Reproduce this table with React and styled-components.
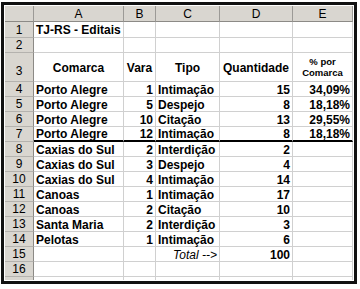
import React from 'react';
import styled, { createGlobalStyle } from 'styled-components';

const Global = createGlobalStyle`
  html, body { margin: 0; padding: 0; background: #ffffff; }
  body { font-family: "Liberation Sans", Arial, sans-serif; }
`;

const Page = styled.div`
  padding: 2px 0 0 1px;
`;

const Frame = styled.div`
  box-sizing: border-box;
  width: 356px;
  border: 3px solid #111;
  padding: 1px;
  background: #fff;
`;

const Sheet = styled.div`
  display: grid;
  grid-template-columns: 29px 90px 32px 64px 73px 60px;
  grid-template-rows: 16px 16px 15px 29px repeat(14, 15px);
  height: 274px;
  overflow: hidden;
  font-size: 12px;
  color: #000;
`;

const HeadCell = styled.div`
  box-sizing: border-box;
  background: #d9d6d0;
  border-right: 1px solid #9c9a96;
  border-bottom: 1px solid #8c8a86;
  display: flex;
  align-items: center;
  justify-content: center;
  font-size: 12px;
  line-height: 1;
`;

const RowNum = styled.div`
  box-sizing: border-box;
  background: #d9d6d0;
  border-right: 1px solid #8c8a86;
  border-bottom: 1px solid #b4b2ae;
  display: flex;
  align-items: ${p => (p.$tall ? 'flex-end' : 'center')};
  padding-bottom: ${p => (p.$tall ? '4px' : '0')};
  justify-content: center;
  font-size: 12px;
  line-height: 1;
`;

const Cell = styled.div`
  box-sizing: border-box;
  border-right: 1px solid #d0d0d0;
  border-bottom: ${p => (p.$thick ? '2px solid #000' : '1px solid #d0d0d0')};
  display: flex;
  align-items: center;
  justify-content: ${p =>
    p.$align === 'right' ? 'flex-end' : p.$align === 'center' ? 'center' : 'flex-start'};
  text-align: ${p => p.$align || 'left'};
  padding: 1px 2px 0 2px;
  font-weight: ${p => (p.$bold ? 700 : 400)};
  font-style: ${p => (p.$italic ? 'italic' : 'normal')};
  font-size: ${p => p.$size || 12}px;
  line-height: ${p => (p.$size ? 1.15 : 1)};
  white-space: pre;
  overflow: visible;
`;

const cols = ['A', 'B', 'C', 'D', 'E'];

const B = (t, align) => ({ t, bold: true, align });

const rows = [
  { n: 1, cells: [B('TJ-RS - Editais', 'left'), {}, {}, {}, {}] },
  { n: 2, cells: [{}, {}, {}, {}, {}] },
  {
    n: 3,
    tall: true,
    cells: [
      B('Comarca', 'center'),
      B('Vara', 'center'),
      B('Tipo', 'center'),
      B('Quantidade', 'center'),
      { t: '% por\nComarca', bold: true, align: 'center', size: 9.5 },
    ],
  },
  { n: 4, cells: [B('Porto Alegre', 'left'), B('1', 'right'), B('Intimação', 'left'), B('15', 'right'), B('34,09%', 'right')] },
  { n: 5, cells: [B('Porto Alegre', 'left'), B('5', 'right'), B('Despejo', 'left'), B('8', 'right'), B('18,18%', 'right')] },
  { n: 6, cells: [B('Porto Alegre', 'left'), B('10', 'right'), B('Citação', 'left'), B('13', 'right'), B('29,55%', 'right')] },
  { n: 7, thick: true, cells: [B('Porto Alegre', 'left'), B('12', 'right'), B('Intimação', 'left'), B('8', 'right'), B('18,18%', 'right')] },
  { n: 8, cells: [B('Caxias do Sul', 'left'), B('2', 'right'), B('Interdição', 'left'), B('2', 'right'), {}] },
  { n: 9, cells: [B('Caxias do Sul', 'left'), B('3', 'right'), B('Despejo', 'left'), B('4', 'right'), {}] },
  { n: 10, cells: [B('Caxias do Sul', 'left'), B('4', 'right'), B('Intimação', 'left'), B('14', 'right'), {}] },
  { n: 11, cells: [B('Canoas', 'left'), B('1', 'right'), B('Intimação', 'left'), B('17', 'right'), {}] },
  { n: 12, cells: [B('Canoas', 'left'), B('2', 'right'), B('Citação', 'left'), B('10', 'right'), {}] },
  { n: 13, cells: [B('Santa Maria', 'left'), B('2', 'right'), B('Interdição', 'left'), B('3', 'right'), {}] },
  { n: 14, cells: [B('Pelotas', 'left'), B('1', 'right'), B('Intimação', 'left'), B('6', 'right'), {}] },
  { n: 15, cells: [{}, {}, { t: 'Total -->', italic: true, align: 'right' }, B('100', 'right'), {}] },
  { n: 16, cells: [{}, {}, {}, {}, {}] },
  { n: 17, hideNum: true, cells: [{}, {}, {}, {}, {}] },
];

export default function App() {
  return (
    <Page>
      <Global />
      <Frame>
        <Sheet>
          <HeadCell />
          {cols.map(c => (
            <HeadCell key={c}>{c}</HeadCell>
          ))}
          {rows.map(r => (
            <React.Fragment key={r.n}>
              <RowNum $tall={r.tall}>{r.hideNum ? '' : r.n}</RowNum>
              {r.cells.map((c, i) => (
                <Cell
                  key={i}
                  $align={c.align}
                  $bold={c.bold}
                  $italic={c.italic}
                  $size={c.size}
                  $thick={r.thick}
                >
                  {c.t || ''}
                </Cell>
              ))}
            </React.Fragment>
          ))}
        </Sheet>
      </Frame>
    </Page>
  );
}
